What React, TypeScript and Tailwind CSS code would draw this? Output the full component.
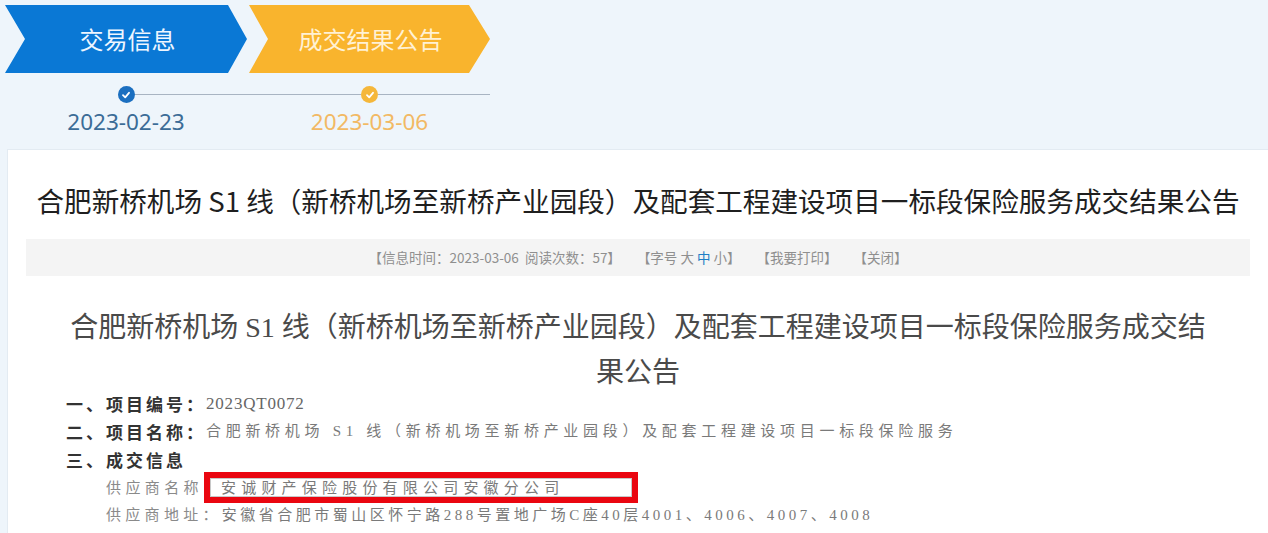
import React from "react";

const sans = "font-['Noto_Sans','Noto_Sans_CJK_SC',sans-serif]";
const serif = "font-['Liberation_Serif','Noto_Sans_CJK_SC',serif]";

function Check({ color }: { color: string }) {
  return (
    <div className={`w-[17px] h-[17px] rounded-full flex items-center justify-center ${color}`}>
      <svg width="10" height="10" viewBox="0 0 10 10">
        <path d="M2 5.2 L4.2 7.3 L8 2.8" fill="none" stroke="white" strokeWidth="1.8" strokeLinecap="round" strokeLinejoin="round" />
      </svg>
    </div>
  );
}

export default function App() {
  return (
    <div className={`w-[1268px] h-[533px] overflow-hidden bg-[#eef5fb] ${sans}`}>
      {/* Steps */}
      <div className="pl-[5px] pt-[5px]">
        <div className="flex gap-[2px]">
          <div className="w-[242px] h-[68px] bg-[#0a78d5] [clip-path:polygon(0_0,223px_0,100%_50%,223px_100%,0_100%,20px_50%)] flex items-center justify-center pl-[3px] text-[24px] text-[#eef6ff] font-['Noto_Sans_CJK_SC',sans-serif]">
            交易信息
          </div>
          <div className="w-[241px] h-[68px] bg-[#f9b42d] [clip-path:polygon(0_0,220px_0,100%_50%,220px_100%,0_100%,19px_50%)] flex items-center justify-center pl-[2px] text-[24px] text-[#fff1d4] font-['Noto_Sans_CJK_SC',sans-serif]">
            成交结果公告
          </div>
        </div>
        <div className="flex items-center mt-[13px] h-[17px]">
          <div className="w-[242px] flex items-center">
            <div className="flex-1" />
            <Check color="bg-[#1b6fc0]" />
            <div className="flex-1 h-px bg-[#a8b4c2]" />
          </div>
          <div className="w-[2px] h-px bg-[#a8b4c2]" />
          <div className="w-[241px] flex items-center">
            <div className="flex-1 h-px bg-[#a8b4c2]" />
            <Check color="bg-[#f5b73a]" />
            <div className="flex-1 h-px bg-[#a8b4c2]" />
          </div>
        </div>
        <div className="flex gap-[2px] mt-[4px] text-[22.5px] leading-[30px] font-['Noto_Sans',sans-serif]">
          <div className="w-[242px] text-center text-[#3b6c97]">2023-02-23</div>
          <div className="w-[241px] text-center text-[#f2b964]">2023-03-06</div>
        </div>
      </div>

      {/* Card */}
      <div className="ml-[7px] mt-[12px] bg-white border-t border-l border-[#e3ebf2] px-[18px] h-[400px]">
        <h1 className="pt-[30px] text-center whitespace-nowrap text-[27.6px] leading-[40px] text-[#1f1f1f] font-['Noto_Sans_CJK_SC',sans-serif]">
          合肥新桥机场 S1 线（新桥机场至新桥产业园段）及配套工程建设项目一标段保险服务成交结果公告
        </h1>
        <div className="mt-[19px] h-[37px] bg-[#f4f4f4] flex items-center justify-center text-[13.5px] text-[#8f8f8f] font-['Noto_Sans_CJK_SC',sans-serif]">
          <span>【信息时间：2023-03-06&nbsp;&nbsp;阅读次数：57】</span>
          <span className="ml-[16px]">【字号 大 <span className="text-[#1f7fc6]">中</span> 小】</span>
          <span className="ml-[16px]">【我要打印】</span>
          <span className="ml-[16px]">【关闭】</span>
        </div>
        <h2 className={`mt-[29px] text-center text-[28px] leading-[45px] text-[#4a4a4a] ${serif}`}>
          合肥新桥机场 S1 线（新桥机场至新桥产业园段）及配套工程建设项目一标段保险服务成交结
          <br />
          果公告
        </h2>
        <div className="mt-[-5px] pl-[40px] text-[17px]">
          <div className="flex items-center h-[27.75px]">
            <span className="font-bold text-[#333] tracking-[3px] font-['Noto_Sans_CJK_SC',sans-serif]">一、项目编号：</span>
            <span className={`text-[#666] text-[17px] tracking-[0.8px] ${serif}`}>2023QT0072</span>
          </div>
          <div className="flex items-center h-[27.75px]">
            <span className="font-bold text-[#333] tracking-[3px] font-['Noto_Sans_CJK_SC',sans-serif]">二、项目名称：</span>
            <span className={`text-[#7a7a7a] text-[15px] tracking-[4.7px] ${serif}`}>
              合肥新桥机场 S1 线（新桥机场至新桥产业园段）及配套工程建设项目一标段保险服务
            </span>
          </div>
          <div className="flex items-center h-[27.75px]">
            <span className="font-bold text-[#333] tracking-[3px] font-['Noto_Sans_CJK_SC',sans-serif]">三、成交信息</span>
          </div>
          <div className="flex items-center h-[27.75px] pl-[40px] text-[15px] text-[#8a8a8a] font-['Noto_Sans_CJK_SC',sans-serif]">
            <span className="tracking-[4.4px]">供应商名称</span>
            <span className="ml-[1px] shrink-0 border-[6px] border-[#ea0610] h-[31px] w-[434px] flex">
              <span className="flex-1 border border-[#c8c8c8] flex items-center pl-[10px] tracking-[5.2px] text-[#7a7a7a]">
                安诚财产保险股份有限公司安徽分公司
              </span>
            </span>
          </div>
          <div className={`flex items-center h-[27.75px] pl-[40px] text-[15px] text-[#7a7a7a] ${serif}`}>
            <span className="tracking-[4.3px] text-[#8a8a8a]">供应商地址：</span>
            <span className="tracking-[3.5px]">安徽省合肥市蜀山区怀宁路288号置地广场C座40层4001、4006、4007、4008</span>
          </div>
        </div>
      </div>
    </div>
  );
}
